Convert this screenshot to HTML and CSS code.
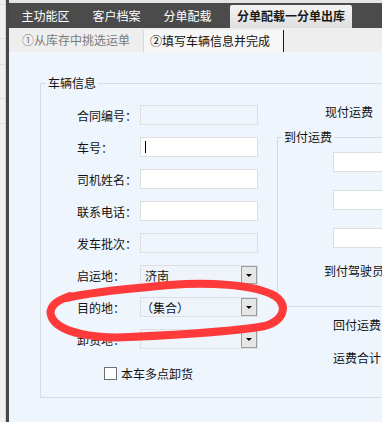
FILE: index.html
```html
<!DOCTYPE html>
<html lang="zh">
<head>
<meta charset="utf-8">
<title>分单配载一分单出库</title>
<link rel="stylesheet" href="styles.css">
</head>
<body>
<div class="app">
  <div class="sidebar"><div class="side-light"></div><div class="side-gap"></div><div class="side-dark"></div></div>
  <div class="main">
    <div class="topstrip"></div>
    <div class="topbar">
      <div class="tab">主功能区</div>
      <div class="tab">客户档案</div>
      <div class="tab">分单配载</div>
      <div class="tab active">分单配载一分单出库</div>
    </div>
    <div class="subbar">
      <div class="subtab">①从库存中挑选运单</div>
      <div class="subtab active">②填写车辆信息并完成</div>
    </div>
    <div class="content">
      <fieldset class="vehicle">
        <legend>车辆信息</legend>
        <div class="cols">
          <div class="left">
            <div class="row"><span class="lbl">合同编号：</span><span class="field ro"></span></div>
            <div class="row"><span class="lbl">车号：</span><span class="field edit"><span class="caret"></span></span></div>
            <div class="row"><span class="lbl">司机姓名：</span><span class="field edit"></span></div>
            <div class="row"><span class="lbl">联系电话：</span><span class="field edit"></span></div>
            <div class="row"><span class="lbl">发车批次：</span><span class="field ro"></span></div>
            <div class="row"><span class="lbl">启运地：</span><span class="field select"><span class="val">济南</span><span class="dd"><i></i></span></span></div>
            <div class="row"><span class="lbl">目的地：</span><span class="field select"><span class="val paren">（集合）</span><span class="dd"><i></i></span></span></div>
            <div class="row"><span class="lbl">卸货地：</span><span class="field select"><span class="val"></span><span class="dd"><i></i></span></span></div>
            <div class="check-row"><span class="checkbox"></span><span>本车多点卸货</span></div>
          </div>
          <div class="right">
            <div class="cash">现付运费</div>
            <fieldset class="arrive">
              <legend>到付运费</legend>
              <div class="arrive-body">
                <span class="field edit wide"></span>
                <span class="field edit wide"></span>
                <span class="field edit wide"></span>
                <div class="driver">到付驾驶员</div>
              </div>
            </fieldset>
            <div class="back">回付运费</div>
            <div class="total">运费合计</div>
          </div>
        </div>
      </fieldset>
    </div>
  </div>
  <svg class="mark" width="382" height="422" viewBox="0 0 382 422">
    <path d="M 66 298 C 100 290, 140 288, 170 285 C 205 282, 255 284, 275 296 C 288 305, 285 320, 265 326 C 230 332, 175 335, 130 337 C 95 339, 60 333, 52 318 C 47 308, 55 301, 70 296" fill="none" stroke="#ff3a3a" stroke-width="8" stroke-linecap="round" stroke-linejoin="round"/>
  </svg>
</div>
</body>
</html>
```
FILE: styles.css
```css
* { box-sizing: border-box; }
html, body { margin: 0; padding: 0; }
body {
  width: 382px;
  height: 422px;
  overflow: hidden;
  font-family: "Noto Sans CJK SC", "Noto Sans", sans-serif;
  font-size: 12px;
  color: #111;
}
.app {
  position: relative;
  display: flex;
  width: 382px;
  height: 422px;
  overflow: hidden;
}
.sidebar { display: flex; flex: none; width: 9px; height: 100%; }
.side-light {
  width: 5px;
  background:
    linear-gradient(#dcdcdc, #dcdcdc) 0 4px / 100% 1px no-repeat,
    linear-gradient(#dcdcdc, #dcdcdc) 0 38px / 100% 1px no-repeat,
    linear-gradient(#dcdcdc, #dcdcdc) 0 64px / 100% 1px no-repeat,
    linear-gradient(#dcdcdc, #dcdcdc) 0 98px / 100% 1px no-repeat,
    linear-gradient(#dcdcdc, #dcdcdc) 0 123px / 100% 1px no-repeat,
    #f0f0f0;
}
.side-gap { width: 1px; background: #d6d6d6; }
.side-dark { width: 3px; background: #474747; }
.main { flex: 1; display: flex; flex-direction: column; min-width: 0; }
.topstrip { height: 3px; background: #e4e4e4; }
.topbar {
  height: 25px;
  background: #4b4b4b;
  display: flex;
  padding-left: 1px;
}
.tab {
  padding: 0 11.5px;
  line-height: 25px;
  color: #fff;
  white-space: nowrap;
}
.tab.active {
  margin: 2px 0 0 7px;
  padding: 0 7px;
  line-height: 22px;
  font-weight: bold;
  color: #1a1a1a;
  background: linear-gradient(#f4f4f4, #dedede);
  border-radius: 2px 2px 0 0;
}
.subbar {
  height: 24px;
  background: #eeeeee;
  display: flex;
  padding-left: 1px;
}
.subtab {
  padding: 0 13px 0 12px;
  line-height: 24px;
  color: #7a7a7a;
  white-space: nowrap;
}
.subtab.active {
  margin-top: 2px;
  padding: 0 13px 0 6px;
  line-height: 22px;
  color: #111;
  background: #f6f6f6;
  border-left: 1px solid #d8d8d8;
  border-right: 1px solid #1a1a1a;
}
.content {
  flex: 1;
  background: #eef5fd;
  overflow: hidden;
  padding: 23px 0 0 31px;
}
fieldset {
  margin: 0;
  padding: 0;
  border: 1px solid #d6dbe0;
  min-width: 0;
}
legend {
  padding: 0 2px;
  line-height: 16px;
}
.vehicle { width: 620px; }
.vehicle > legend { margin-left: 5px; }
.cols {
  display: flex;
  padding: 14px 0 16px 36px;
}
.left {
  width: 181px;
  flex: none;
  display: flex;
  flex-direction: column;
  gap: 12px;
}
.row { display: flex; align-items: center; height: 20px; }
.lbl { width: 63px; flex: none; white-space: nowrap; }
.field {
  display: flex;
  align-items: center;
  width: 118px;
  height: 20px;
  border: 1px solid #dcdfe2;
  background: #eef5fd;
  flex: none;
}
.field.edit { background: #fff; }
.field.select { justify-content: space-between; background: #eef4fa; }
.caret {
  width: 1px;
  height: 12px;
  margin-left: 4px;
  background: #000;
}
.val { padding-left: 4px; white-space: nowrap; }
.val.paren { padding-left: 0; }
.dd {
  width: 16px;
  height: 18px;
  border: 1px solid #9c9c9c;
  background: #e6e6e6;
  display: flex;
  align-items: center;
  justify-content: center;
}
.dd i {
  width: 0;
  height: 0;
  border-left: 3px solid transparent;
  border-right: 3px solid transparent;
  border-top: 3px solid #000;
}
.check-row {
  display: flex;
  align-items: center;
  gap: 4px;
  height: 16px;
  margin-top: 4px;
  padding-left: 27px;
  white-space: nowrap;
}
.checkbox {
  width: 13px;
  height: 13px;
  border: 1px solid #707070;
  background: #fff;
  flex: none;
}
.right {
  margin-left: 19px;
  flex: none;
  width: 330px;
  display: flex;
  flex-direction: column;
}
.cash { margin-top: -3px; height: 20px; line-height: 20px; padding-left: 48px; }
.arrive { margin-top: 7px; width: 330px; }
.arrive > legend { margin-left: 4px; }
.arrive-body {
  display: flex;
  flex-direction: column;
  gap: 18px;
  padding: 7px 0 27px 55px;
}
.field.wide { width: 120px; }
.driver {
  margin: -3px 0 0 -9px;
  line-height: 16px;
  white-space: nowrap;
}
.back { margin-top: 10px; line-height: 16px; padding-left: 56px; }
.total { margin-top: 17px; line-height: 16px; padding-left: 56px; }
.mark {
  position: absolute;
  left: 0;
  top: 0;
  pointer-events: none;
}
```
